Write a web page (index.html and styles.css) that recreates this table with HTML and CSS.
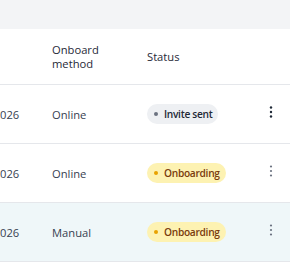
FILE: index.html
```html
<!DOCTYPE html>
<html>
<head>
<meta charset="utf-8">
<link rel="stylesheet" href="styles.css">
</head>
<body>
<div class="page">
  <div class="toolbar"></div>
  <div class="table">
    <div class="row head">
      <div class="cell"></div>
      <div class="cell">Onboard<br>method</div>
      <div class="cell">Status</div>
      <div class="cell"></div>
    </div>
    <div class="row">
      <div class="cell">026</div>
      <div class="cell">Online</div>
      <div class="cell"><span class="badge gray"><span class="dot"></span>Invite sent</span></div>
      <div class="cell menu dark"><svg width="4" height="14" viewBox="0 0 4 14"><circle cx="2" cy="2.5" r="1.2"/><circle cx="2" cy="7" r="1.2"/><circle cx="2" cy="11.5" r="1.2"/></svg></div>
    </div>
    <div class="row">
      <div class="cell">026</div>
      <div class="cell">Online</div>
      <div class="cell"><span class="badge yellow"><span class="dot"></span>Onboarding</span></div>
      <div class="cell menu"><svg width="4" height="14" viewBox="0 0 4 14"><circle cx="2" cy="2.5" r="1.1"/><circle cx="2" cy="7" r="1.1"/><circle cx="2" cy="11.5" r="1.1"/></svg></div>
    </div>
    <div class="row selected">
      <div class="cell">026</div>
      <div class="cell">Manual</div>
      <div class="cell"><span class="badge yellow"><span class="dot"></span>Onboarding</span></div>
      <div class="cell menu"><svg width="4" height="14" viewBox="0 0 4 14"><circle cx="2" cy="2.5" r="1.1"/><circle cx="2" cy="7" r="1.1"/><circle cx="2" cy="11.5" r="1.1"/></svg></div>
    </div>
  </div>
</div>
</body>
</html>
```
FILE: styles.css
```css
html, body {
  margin: 0;
  padding: 0;
  background: #ffffff;
}
.page {
  width: 290px;
  font-family: "Open Sans", "Noto Sans", sans-serif;
  font-size: 11.2px;
  color: #374151;
}
.toolbar {
  height: 29px;
  background: #f3f4f6;
}
.row {
  display: grid;
  grid-template-columns: 52px 95px 1fr 38px;
  align-items: center;
  height: 59px;
  box-sizing: border-box;
  border-bottom: 1px solid #e5e7eb;
}
.row.head {
  height: 56px;
  color: #1f2937;
  line-height: 14px;
}
.row.selected {
  background: #eff7f9;
}
.cell {
  white-space: nowrap;
}
.badge {
  display: inline-flex;
  align-items: center;
  gap: 6px;
  height: 20px;
  padding: 0 6px 0 7px;
  border-radius: 10px;
  font-size: 10.2px;
  font-weight: 600;
  letter-spacing: -0.3px;
  box-sizing: border-box;
}
.badge .dot {
  width: 4px;
  height: 4px;
  border-radius: 50%;
}
.badge.gray {
  background: #eef0f3;
  color: #1f2937;
}
.badge.gray .dot {
  background: #6b7280;
}
.badge.yellow {
  background: #fdf2b2;
  color: #7a3b0d;
}
.badge.yellow .dot {
  background: #e8a200;
}
.menu {
  display: flex;
  justify-content: center;
  fill: #6b7280;
  margin-top: -4px;
}
.menu.dark {
  fill: #1f2937;
}
```
